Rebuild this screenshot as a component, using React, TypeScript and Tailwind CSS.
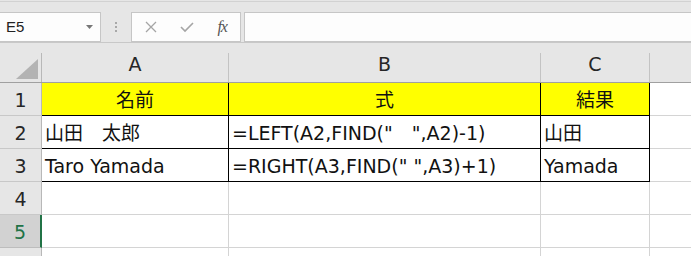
import React from 'react'

const sheetFont = "font-['DejaVu_Sans','Noto_Sans_CJK_JP',sans-serif]"

type CellType = { text?: string; align?: 'left' | 'center'; fill?: boolean; boxed?: boolean }

const rows: Array<Array<CellType>> = [
  [
    { text: '名前', align: 'center', fill: true, boxed: true },
    { text: '式', align: 'center', fill: true, boxed: true },
    { text: '結果', align: 'center', fill: true, boxed: true }
  ],
  [
    { text: '山田\u3000太郎', boxed: true },
    { text: '=LEFT(A2,FIND("\u3000",A2)-1)', boxed: true },
    { text: '山田', boxed: true }
  ],
  [
    { text: 'Taro Yamada', boxed: true },
    { text: '=RIGHT(A3,FIND(" ",A3)+1)', boxed: true },
    { text: 'Yamada', boxed: true }
  ],
  [{}, {}, {}],
  [{}, {}, {}],
  [{}, {}, {}]
]

const Toolbar = () => (
  <div className="h-[42px] bg-[#e6e6e6] flex flex-col">
    <div className="h-px" />
    <div className="h-px bg-[#d2d2d2]" />
    <div className="flex flex-row mt-[10px] h-[30px]">
      <div className="w-[101px] bg-[#fdfdfd] border border-l-0 border-[#c6c6c6] flex flex-row items-center pl-[6px] pr-[7px]">
        <span className="flex-1 text-[15px] text-[#222] font-['Liberation_Sans',sans-serif]">E5</span>
        <svg width="7" height="4" viewBox="0 0 7 4">
          <polygon points="0,0 7,0 3.5,4" fill="#777" />
        </svg>
      </div>
      <div className="w-[30px] flex items-center justify-center">
        <div className="flex flex-col gap-[2px]">
          <div className="w-[2px] h-[2px] bg-[#a8a8a8]" />
          <div className="w-[2px] h-[2px] bg-[#a8a8a8]" />
          <div className="w-[2px] h-[2px] bg-[#a8a8a8]" />
        </div>
      </div>
      <div className="w-[110px] bg-[#fdfdfd] border border-[#c6c6c6] flex flex-row items-center">
        <div className="w-[36px] flex justify-center ml-[1px]">
          <svg width="12" height="12" viewBox="0 0 12 12">
            <path d="M1 1 L11 11 M11 1 L1 11" stroke="#a5a5a5" strokeWidth="1.3" />
          </svg>
        </div>
        <div className="w-[36px] flex justify-center">
          <svg width="14" height="12" viewBox="0 0 14 12">
            <path d="M1 6 L5 10 L13 2" stroke="#a5a5a5" strokeWidth="1.6" fill="none" />
          </svg>
        </div>
        <div className="w-[36px] flex justify-center">
          <span className="italic text-[16px] text-[#555] font-['Liberation_Serif',serif] tracking-[-1px]">fx</span>
        </div>
      </div>
      <div className="w-[3px]" />
      <div className="flex-1 bg-[#fdfdfd] border border-r-0 border-[#c6c6c6]" />
    </div>
  </div>
)

const colWidths = ['w-[187px]', 'w-[312px]', 'w-[109px]']

const HeaderRow = () => (
  <div className={`flex flex-row h-[41px] bg-[#e6e6e6] border-t border-[#c8c8c8] border-b border-b-[#a0a0a0] ${sheetFont}`}>
    <div className="w-[42px] flex flex-row">
      <div className="flex-1 flex items-end justify-end pr-[3px] pb-[3px]">
        <svg width="22" height="20" viewBox="0 0 22 20">
          <polygon points="22,0 22,20 0,20" fill="#b3b3b3" />
        </svg>
      </div>
      <div className="w-px h-[29px] self-end bg-[#b8b8b8]" />
    </div>
    {['A', 'B', 'C'].map((l, i) => (
      <div key={l} className={`${colWidths[i]} flex flex-row`}>
        <div className="flex-1 flex items-center justify-center text-[19px] text-[#262626] pt-[4px]">{l}</div>
        <div className="w-px h-[29px] self-end bg-[#c3c3c3]" />
      </div>
    ))}
    <div className="flex-1" />
  </div>
)

const DataRow = ({ index, cells }: { index: number; cells: Array<CellType> }) => {
  const selected = index === 5
  return (
    <div className={`flex flex-row h-[33px] ${sheetFont}`}>
      <div
        className={`w-[42px] flex items-center justify-center text-[19px] border-b pt-[2px] ${
          selected
            ? 'bg-[#d2d2d2] text-[#217346] border-r-2 border-r-[#217346] border-b-[#bdbdbd]'
            : 'bg-[#e6e6e6] text-[#262626] border-r border-r-[#b8b8b8] border-b-[#c8c8c8]'
        }`}
      >
        {index}
      </div>
      {cells.map((c, i) => (
        <div
          key={i}
          className={`${colWidths[i]} flex items-center text-[19px] text-[#111] pt-[2px] whitespace-pre border-r border-b ${
            c.boxed ? 'border-black' : 'border-[#d4d4d4]'
          } ${c.fill ? 'bg-[#ffff00]' : 'bg-white'} ${c.align === 'center' ? 'justify-center' : 'justify-start pl-[3px]'}`}
        >
          {c.text}
        </div>
      ))}
      <div className="flex-1 bg-white border-b border-[#d4d4d4]" />
    </div>
  )
}

export default function App() {
  return (
    <div className="w-[691px] h-[256px] overflow-hidden bg-white">
      <Toolbar />
      <HeaderRow />
      {rows.map((cells, i) => (
        <DataRow key={i} index={i + 1} cells={cells} />
      ))}
    </div>
  )
}
